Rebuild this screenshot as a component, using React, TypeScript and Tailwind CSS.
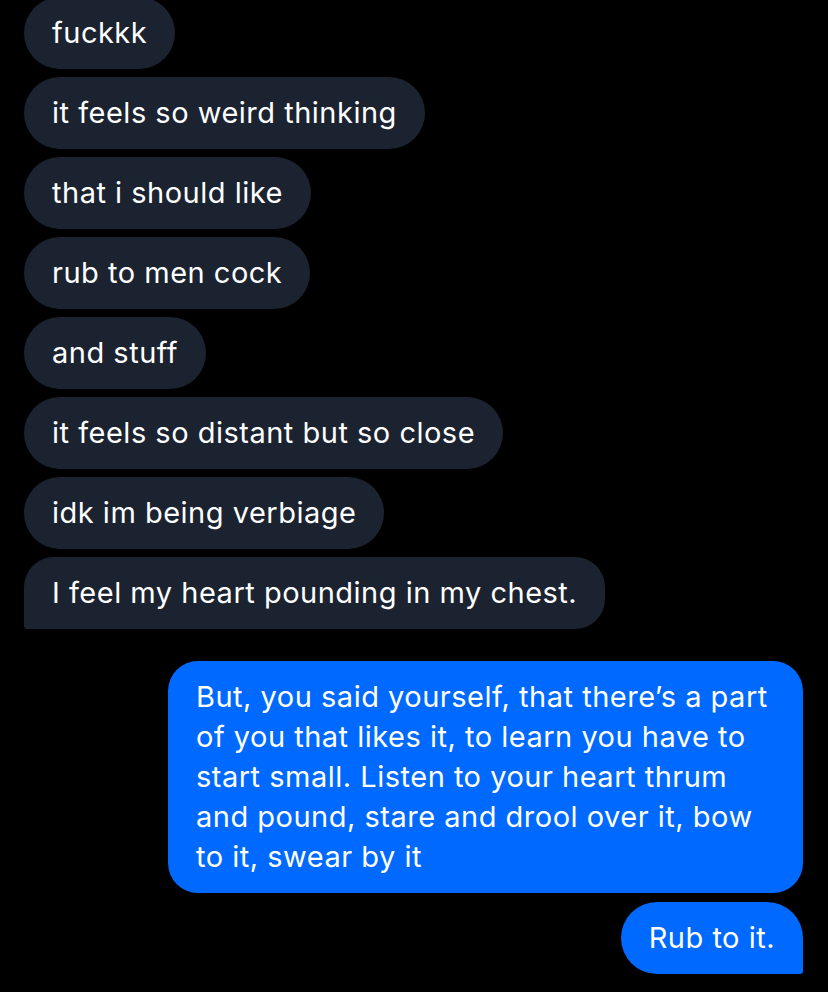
import React from 'react';

const incoming = [
  'fuckkk',
  'it feels so weird thinking',
  'that i should like',
  'rub to men cock',
  'and stuff',
  'it feels so distant but so close',
  'idk im being verbiage',
  'I feel my heart pounding in my chest.',
];

export default function App() {
  return (
    <div
      className="min-h-[992px] w-[828px] bg-black overflow-hidden text-[29px] leading-[40px] tracking-[0.5px] text-white"
      style={{ fontFamily: 'Inter, "Noto Sans", sans-serif' }}
    >
      <div className="flex flex-col items-start gap-2 px-6 -mt-[3px]">
        {incoming.map((msg, i) => (
          <div
            key={i}
            className={
              i === incoming.length - 1
                ? 'bg-[#1c2330] rounded-[30px] rounded-bl-[3px] px-7 py-4'
                : 'bg-[#1c2330] rounded-[36px] px-7 py-4'
            }
          >
            {msg}
          </div>
        ))}
      </div>

      {/* outgoing */}
      <div className="flex flex-col items-end gap-[9px] pl-[168px] pr-[25px] mt-8">
        <div className="bg-[#0069ff] rounded-[30px] px-7 py-4">
          But, you said yourself, that there’s a part of you that likes it, to learn you have to start small. Listen to your heart thrum and pound, stare and drool over it, bow to it, swear by it
        </div>
        <div className="bg-[#0069ff] rounded-[36px] rounded-br-[3px] px-7 py-4">
          Rub to it.
        </div>
      </div>
    </div>
  );
}
